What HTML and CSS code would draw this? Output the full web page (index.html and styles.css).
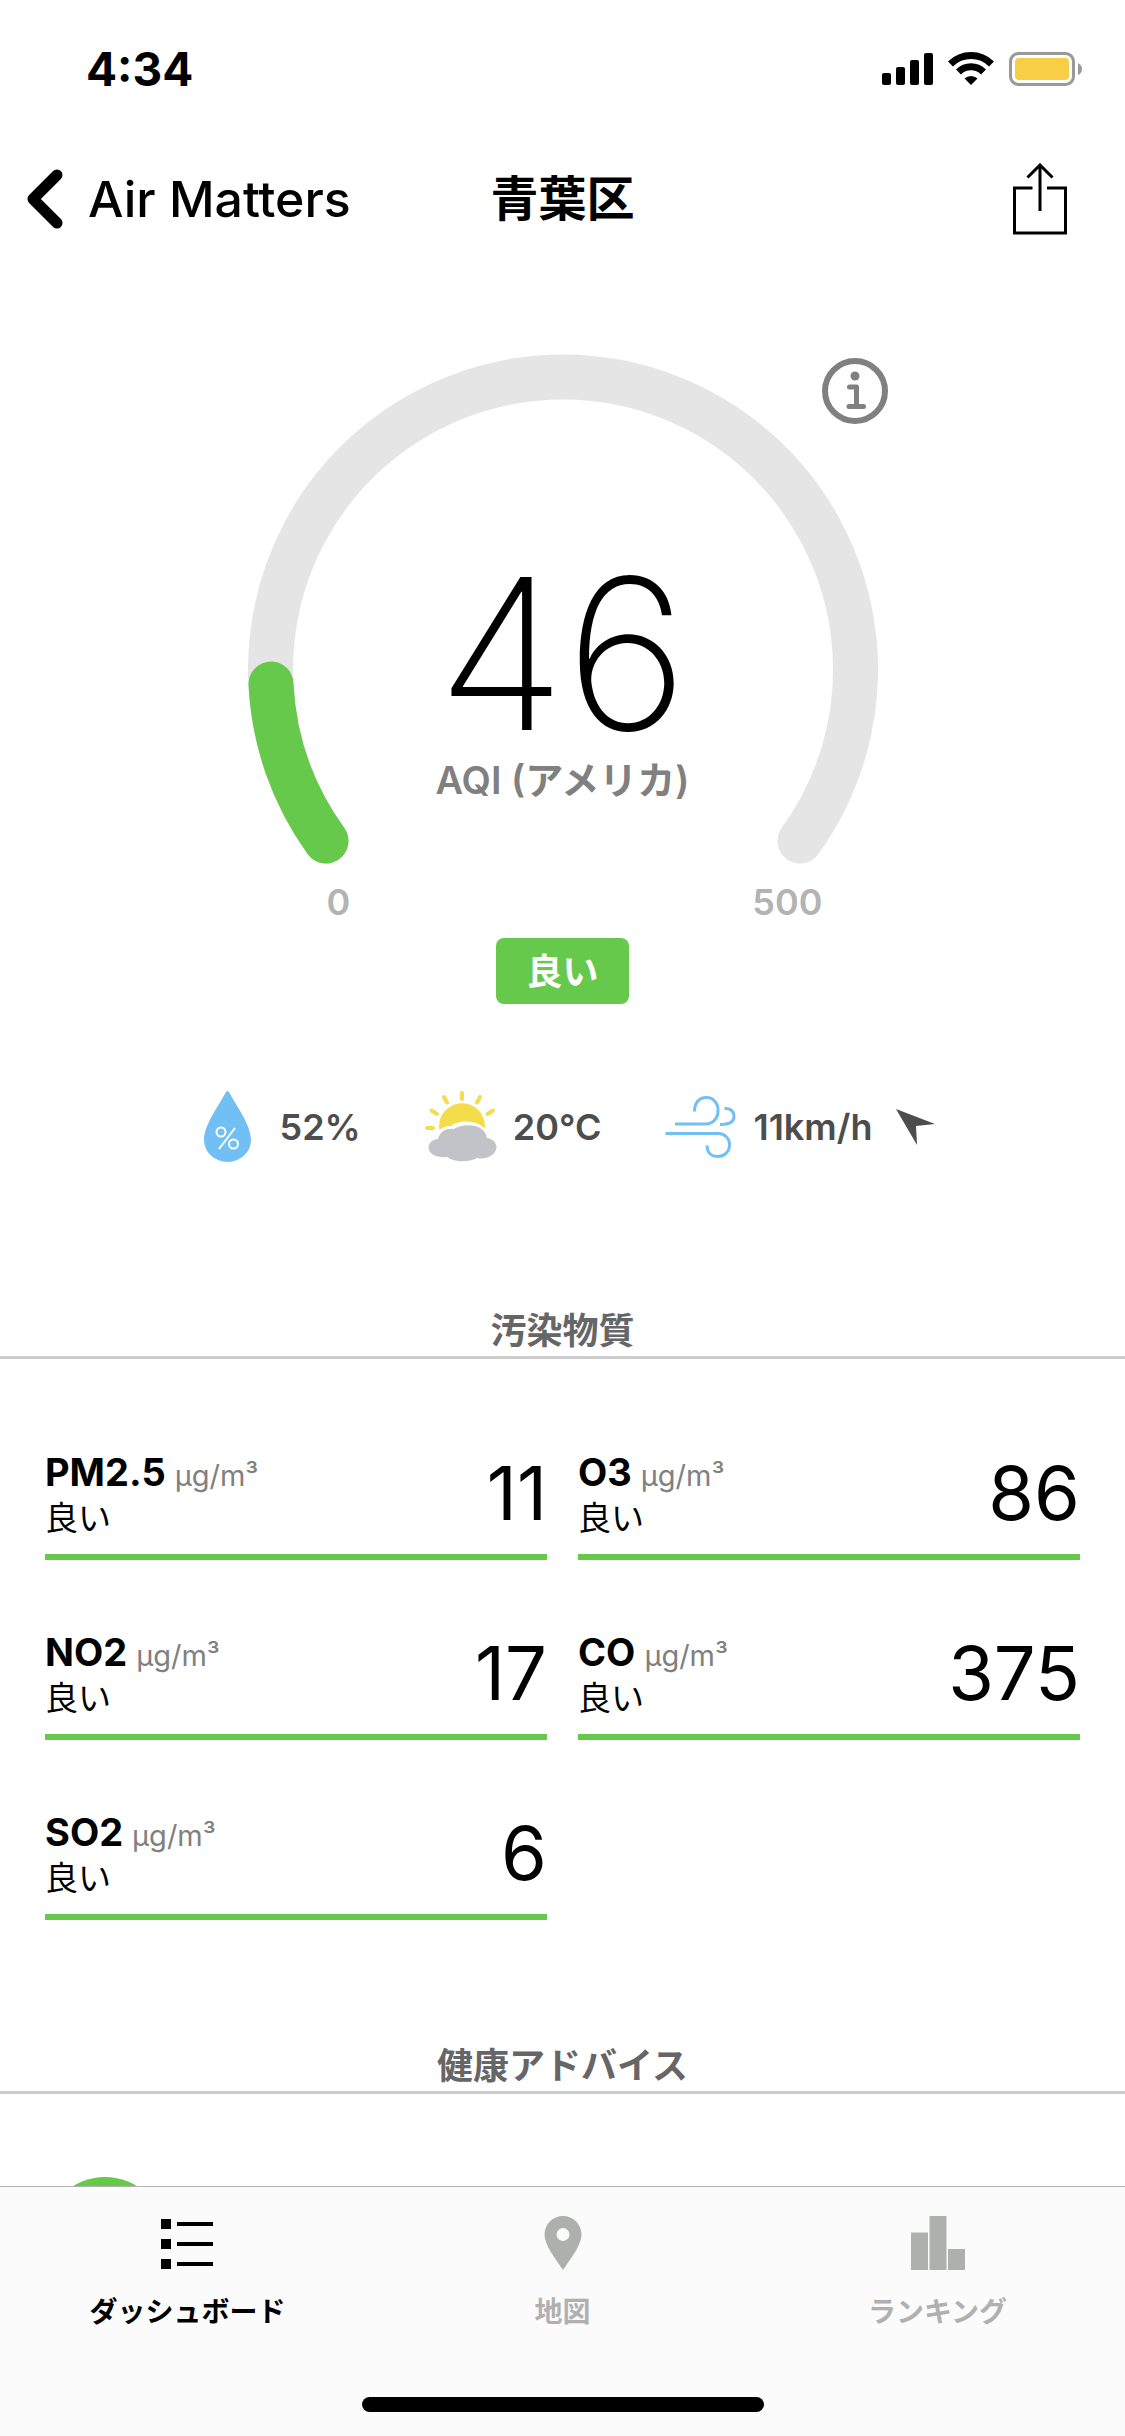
FILE: index.html
```html
<!DOCTYPE html>
<html lang="ja">
<head>
<meta charset="utf-8">
<meta name="viewport" content="width=device-width, initial-scale=1">
<title>青葉区 - Air Matters</title>
<link rel="stylesheet" href="styles.css">
</head>
<body>
<div class="app">
  <div class="status">
    <time class="status-time">4:34</time>
    <div class="status-icons">
      <svg width="51" height="34" viewBox="0 0 51 34" aria-hidden="true">
        <rect x="0" y="21" width="9" height="12" rx="2"/>
        <rect x="14" y="15" width="9" height="18" rx="2"/>
        <rect x="28" y="8" width="9" height="25" rx="2"/>
        <rect x="42" y="1" width="9" height="32" rx="2"/>
      </svg>
      <svg width="46" height="34" viewBox="0 0 46 34" aria-hidden="true">
        <g fill="none" stroke="#000" stroke-width="7">
          <path d="M2.500 12A29 29 0 0 1 43.500 12"/>
          <path d="M10.500 20A17.800 17.800 0 0 1 35.500 20"/>
        </g>
        <path d="M16.500 26.500A9.500 9.500 0 0 1 29.500 26.500L23 33Z"/>
      </svg>
      <svg width="74" height="34" viewBox="0 0 74 34" aria-hidden="true">
        <rect x="1.500" y="1.500" width="63" height="31" rx="8" fill="none" stroke="#999" stroke-width="3"/>
        <rect x="6" y="6" width="54" height="22" rx="4" fill="#f8ce46"/>
        <path d="M69 11Q73 13 73 17T69 23Z" fill="#999"/>
      </svg>
    </div>
  </div>

  <header class="nav">
    <a class="back" href="#">
      <svg width="36" height="60" viewBox="0 0 36 60" aria-hidden="true"><path d="M30 6L6 30L30 54" fill="none" stroke="#000" stroke-width="11" stroke-linecap="round" stroke-linejoin="round"/></svg>
      <span>Air Matters</span>
    </a>
    <h1 class="title">青葉区</h1>
    <button class="icon-button share" type="button" aria-label="共有">
      <svg width="54" height="72" viewBox="0 0 54 72" fill="none" stroke="#000" stroke-width="3" aria-hidden="true">
        <path d="M19.500 25H1.500V70H52.500V25H34"/>
        <path d="M27 48V3M14.500 14.500L27 2L39.500 14.500"/>
      </svg>
    </button>
  </header>

  <main class="content">
    <section class="gauge" aria-label="AQI">
      <div class="dial">
        <svg class="dial-arc" viewBox="0 0 630 510" fill="none" stroke-width="45" stroke-linecap="round" aria-hidden="true">
          <path d="M78 487A292.500 292.500 0 1 1 552 487" stroke="#e5e5e5"/>
          <path d="M78 487A292.500 292.500 0 0 1 23 330" stroke="#67c94b"/>
        </svg>
        <div class="reading">
          <strong class="aqi">46</strong>
          <span class="scale-name">AQI (アメリカ)</span>
        </div>
        <button class="icon-button info" type="button" aria-label="情報">
          <svg width="66" height="66" viewBox="0 0 66 66" aria-hidden="true">
            <circle cx="33" cy="33" r="30" fill="none" stroke="#808080" stroke-width="6"/>
            <circle cx="33" cy="18" r="4.500" fill="#808080"/>
            <path d="M27.500 29H34.500V48M27 48.500H41.500" fill="none" stroke="#808080" stroke-width="5" stroke-linecap="round" stroke-linejoin="round"/>
          </svg>
        </button>
      </div>
      <div class="range"><span>0</span><span>500</span></div>
      <span class="level">良い</span>
    </section>

    <ul class="weather">
      <li>
        <svg width="75" height="75" viewBox="0 0 75 75" aria-hidden="true">
          <path d="M36 3Q37.500 1 39 3C47 18 61 36 61 51A23.500 22 0 0 1 14 51C14 36 28 18 36 3Z" fill="#72bff4"/>
          <g fill="none" stroke="#fff" stroke-width="2">
            <circle cx="31" cy="43" r="4.500"/><circle cx="43.500" cy="55" r="4.500"/><path d="M45 39L29 60"/>
          </g>
        </svg>
        <span>52%</span>
      </li>
      <li>
        <svg width="75" height="75" viewBox="0 0 75 75" aria-hidden="true">
          <g stroke="#f4dc4b" stroke-width="4" stroke-linecap="round">
            <path d="M39 4V10M21 8L24 13.500M57 8L54 13.500M8.500 21.500L14 25M70 21.500L64.500 25M4 39H10"/>
          </g>
          <path d="M16.500 42A23 23 0 1 1 62 38L56 44H20Z" fill="#f4dc4b"/>
          <path d="M15 50C10 42 22 36 28 37C34 31 60 28 66 47L60 60H20Z" fill="#fff"/>
          <path d="M15 50C17 42 24 39 31 40C40 34 62 34 64 49C70 50 74 54 73.500 59C72 67 62 71 54 69C45 73.500 32 73.500 24 68C15 69 5.500 66 5.500 58C6 53 10 50.500 15 50Z" fill="#c2c3c9"/>
        </svg>
        <span>20°C</span>
      </li>
      <li>
        <svg width="75" height="75" viewBox="0 0 75 75" fill="none" stroke="#72bff4" stroke-width="3" aria-hidden="true">
          <path d="M12 35H42A12.500 12.500 0 0 0 55 22V21A11.500 12 0 0 0 43.500 8.500C36 8.500 31.500 14 31.500 22.500"/>
          <path d="M61.500 19.500C67 19 71 22 71 27.500C71 33 66 35.500 57 35.500"/>
          <path d="M2.500 44.500H55A11 11 0 0 1 66.500 56C66.500 63 61 67.500 55 67.500C48 67.500 44 63 44 56.500"/>
        </svg>
        <span>11km/h</span>
        <svg class="wind-direction" width="39" height="36" viewBox="0 0 39 36" aria-hidden="true"><path d="M0 0L39 15L20 17L21 36Z" fill="#4d4d4d"/></svg>
      </li>
    </ul>

    <h2 class="section-title">汚染物質</h2>
    <ul class="pollutants">
      <li><div class="pollutant"><span class="name">PM2.5 <small>μg/m³</small></span><span class="grade">良い</span></div><span class="value">11</span></li>
      <li><div class="pollutant"><span class="name">O3 <small>μg/m³</small></span><span class="grade">良い</span></div><span class="value">86</span></li>
      <li><div class="pollutant"><span class="name">NO2 <small>μg/m³</small></span><span class="grade">良い</span></div><span class="value">17</span></li>
      <li><div class="pollutant"><span class="name">CO <small>μg/m³</small></span><span class="grade">良い</span></div><span class="value">375</span></li>
      <li><div class="pollutant"><span class="name">SO2 <small>μg/m³</small></span><span class="grade">良い</span></div><span class="value">6</span></li>
    </ul>

    <h2 class="section-title">健康アドバイス</h2>
    <div class="advice"><span class="advice-icon"></span></div>
  </main>

  <nav class="tabs">
    <div class="tab-row">
      <a class="tab active" href="#" aria-current="page">
        <svg width="54" height="60" viewBox="0 0 54 60" aria-hidden="true"><path d="M0 5h10v10h-10zM0 25h10v10h-10zM0 45h10v10h-10zM16 8h36v4h-36zM16 28h36v4h-36zM16 48h36v4h-36z"/></svg>
        <span>ダッシュボード</span>
      </a>
      <a class="tab" href="#">
        <svg width="54" height="60" viewBox="0 0 54 60" aria-hidden="true"><path fill-rule="evenodd" d="M27 2C17 2 8.500 10 8.500 20.500C8.500 31 19 44 27 56C35 44 45.500 31 45.500 20.500C45.500 10 37 2 27 2ZM27 14A6.500 6.500 0 1 1 27 27A6.500 6.500 0 1 1 27 14Z"/></svg>
        <span>地図</span>
      </a>
      <a class="tab" href="#">
        <svg width="54" height="60" viewBox="0 0 54 60" aria-hidden="true"><path d="M0 18.500h17v37.500h-17zM18.500 2h17v54h-17zM37 35h17v21h-17z"/></svg>
        <span>ランキング</span>
      </a>
    </div>
    <div class="home-indicator"></div>
  </nav>
</div>
</body>
</html>
```
FILE: styles.css
```css
* { box-sizing: border-box; }

body {
  margin: 0;
  background: #fff;
  color: #000;
  font-family: Inter, "Noto Sans CJK JP", sans-serif;
}

h1, h2, ul { margin: 0; padding: 0; }
ul { list-style: none; }
a { color: inherit; text-decoration: none; }
svg { display: block; flex: none; }

.app {
  display: flex;
  flex-direction: column;
  height: 100vh;
}

.status {
  display: flex;
  justify-content: space-between;
  align-items: center;
  flex: none;
  height: 132px;
  padding: 6px 42px 0 86px;
}

.status-time { font-size: 46px; line-height: 54px; font-weight: 700; }
.status-icons { display: flex; gap: 15px; }

.nav {
  display: grid;
  grid-template-columns: 1fr auto 1fr;
  align-items: center;
  flex: none;
  height: 132px;
  padding: 2px 27px 0;
}

.back {
  display: flex;
  align-items: center;
  gap: 25px;
  font-size: 50px;
  line-height: 60px;
  font-weight: 500;
}

.title { font-size: 48px; line-height: 60px; font-weight: 700; }

.icon-button {
  padding: 0;
  border: 0;
  background: none;
}

.share { justify-self: end; margin-right: 31px; }

.content {
  flex: 1;
  min-height: 0;
  overflow: auto;
  scrollbar-width: none;
}

.gauge {
  display: flex;
  flex-direction: column;
  align-items: center;
  padding-top: 90px;
}

.dial {
  position: relative;
  display: grid;
  width: 630px;
}

.dial-arc { grid-area: 1 / 1; width: 100%; }

.reading {
  grid-area: 1 / 1;
  display: flex;
  flex-direction: column;
  align-items: center;
  justify-content: end;
  padding-bottom: 60px;
}

.aqi { font-size: 210px; line-height: 204px; font-weight: 200; }

.scale-name {
  color: #808080;
  font-size: 38px;
  line-height: 48px;
  font-weight: 600;
}

.info {
  position: absolute;
  top: 4px;
  right: -10px;
}

.range {
  display: flex;
  justify-content: space-between;
  width: 520px;
  padding: 14px 0 0 24px;
  color: #b3b3b3;
  font-size: 36px;
  line-height: 48px;
  font-weight: 600;
}

.level {
  margin-top: 12px;
  padding: 2px 30px 0;
  border-radius: 8px;
  background: #67c94b;
  color: #fff;
  font-size: 36px;
  line-height: 64px;
  font-weight: 600;
}

.weather {
  display: flex;
  justify-content: center;
  gap: 62px;
  padding: 85px 0 142px;
  color: #4d4d4d;
  font-size: 36px;
  line-height: 48px;
  font-weight: 600;
}

.weather li { display: flex; align-items: center; gap: 15px; }
.wind-direction { margin-left: 9px; }

.section-title {
  border-bottom: 3px solid #ccc;
  color: #666;
  font-size: 36px;
  line-height: 50px;
  font-weight: 600;
  text-align: center;
}

.pollutants {
  display: grid;
  grid-template-columns: 1fr 1fr;
  gap: 60px 31px;
  padding: 81px 45px 121px;
}

.pollutants li {
  display: flex;
  justify-content: space-between;
  height: 120px;
  border-bottom: 6px solid #67c94b;
}

.pollutant { display: flex; flex-direction: column; padding-top: 10px; }
.name { font-size: 38px; line-height: 45px; font-weight: 700; }
.name small { color: #808080; font-size: 29px; font-weight: 400; }
.grade { font-size: 33px; line-height: 41px; font-weight: 400; }
.value { font-size: 74px; line-height: 107px; font-weight: 400; }

.advice { padding: 83px 45px; }

.advice-icon {
  display: block;
  width: 120px;
  height: 120px;
  border-radius: 50%;
  background: #67c94b;
}

.tabs {
  flex: none;
  border-top: 1px solid #b2b2b2;
  background: #fbfbfb;
}

.tab-row { display: grid; grid-template-columns: repeat(3, 1fr); }

.tab {
  display: flex;
  flex-direction: column;
  align-items: center;
  gap: 17px;
  padding-top: 27px;
  color: #b0b0b0;
  fill: #aeb0ad;
  font-size: 28px;
  line-height: 42px;
  font-weight: 600;
}

.active { color: #000; fill: #000; }

.home-indicator {
  width: 402px;
  height: 15px;
  margin: 64px auto 24px;
  border-radius: 8px;
  background: #000;
}
```
